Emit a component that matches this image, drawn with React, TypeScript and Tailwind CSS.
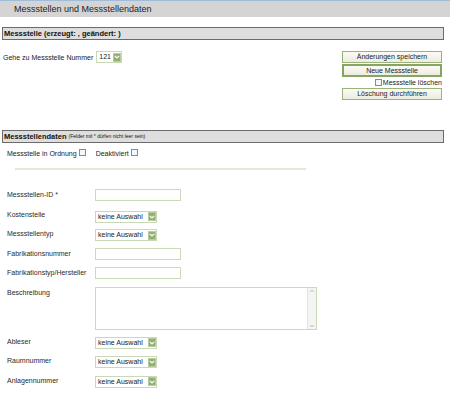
import React from "react";

function Arrow() {
  return (
    <span className="flex h-[9px] w-[8px] items-center justify-center border border-[#b9cca0] bg-[#93ad72]">
      <svg width="6" height="4" viewBox="0 0 6 4">
        <path d="M0.8 0.8 L3 3 L5.2 0.8" fill="none" stroke="#ffffff" strokeWidth="1.1" />
      </svg>
    </span>
  );
}

function Select({ value, w }: { value: string; w: string }) {
  return (
    <div className={`flex h-[12px] items-center justify-between border border-[#c9d8b6] bg-white pl-[2px] pr-[0px] ${w}`}>
      <span className="text-[7px] leading-[10px] text-[#222]">{value}</span>
      <Arrow />
    </div>
  );
}

function Input({ w = "w-[86px]" }: { w?: string }) {
  return <div className={`h-[12px] border border-[#cbdbb7] bg-white ${w}`} />;
}

function Checkbox() {
  return <span className="inline-block h-[7px] w-[7px] border border-[#6f8fb8] bg-[#f3f6fa]" />;
}

function Button({ label, strong }: { label: string; strong?: boolean }) {
  return (
    <div
      className={`flex w-[100px] items-center justify-center bg-gradient-to-b from-[#fbfbf5] to-[#ecece0] text-[7px] leading-[8px] text-[#222] ${
        strong ? "h-[13px] border-2 border-[#87a464]" : "h-[12px] border border-[#99b47a]"
      }`}
    >
      {label}
    </div>
  );
}

function Row({ label, children, h = "h-[19.5px]" }: { label: string; children: React.ReactNode; h?: string }) {
  return (
    <div className={`flex items-start ${h}`}>
      <div className="w-[95px] pl-[7px] pt-[2px] text-[7px] leading-[9px] text-[#2a2a2a]">{label}</div>
      <div className="pt-[1px]">{children}</div>
    </div>
  );
}

export default function App() {
  return (
    <div
      className="relative h-[400px] w-[450px] overflow-hidden bg-white text-[#222]"
      style={{ fontFamily: '"Liberation Sans", Arial, sans-serif' }}
    >
      <div className="h-[17px] border-t border-[#9fbcd9] bg-[#d4d4d4] pl-[14px] text-[9px] leading-[16px] text-[#1e1e1e]">
        Messstellen und Messstellendaten
      </div>

      <div className="ml-[2px] mt-[10px] h-[13px] w-[442px] border border-[#6b6b6b] bg-[#dedede] pl-[1px] text-[7.5px] font-bold leading-[11px] text-[#111]">
        Messstelle (erzeugt: , geändert: )
      </div>

      <div className="mt-[11px] flex justify-between">
        <div className="flex h-[12px] items-center gap-[3px] pl-[3px]">
          <span className="text-[7px] leading-[9px] text-[#222]">Gehe zu Messstelle Nummer</span>
          <Select value="121" w="w-[26px]" />
        </div>
        <div className="mr-[8px] flex w-[100px] flex-col items-end gap-[1px]">
          <Button label="Änderungen speichern" />
          <Button label="Neue Messstelle" strong />
          <div className="flex h-[9px] items-center gap-[1px] text-[7px] leading-[8px]">
            <Checkbox />
            <span>Messstelle löschen</span>
          </div>
          <Button label="Löschung durchführen" />
        </div>
      </div>

      <div className="ml-[2px] mt-[30px] flex h-[13px] w-[442px] items-center border border-[#6b6b6b] bg-[#dedede] pl-[1px] text-[#111]">
        <span className="text-[7.5px] font-bold leading-[11px]">Messstellendaten</span>
        <span className="ml-[2px] text-[5px] leading-[11px]">(Felder mit * dürfen nicht leer sein)</span>
      </div>

      <div className="mt-[5px] flex h-[10px] items-center pl-[7px] text-[7px] leading-[9px]">
        <span>Messstelle in Ordnung</span>
        <span className="ml-[2px]"><Checkbox /></span>
        <span className="ml-[10px]">Deaktiviert</span>
        <span className="ml-[2px]"><Checkbox /></span>
      </div>

      <div className="ml-[15px] mt-[10px] h-[2px] w-[291px] bg-[#e6e6dc]" />

      <div className="mt-[18px] flex flex-col">
        <Row label="Messstellen-ID *"><Input /></Row>
        <Row label="Kostenstelle"><div className="pt-[2px]"><Select value="keine Auswahl" w="w-[62px]" /></div></Row>
        <Row label="Messstellentyp"><div className="pt-[1px]"><Select value="keine Auswahl" w="w-[62px]" /></div></Row>
        <Row label="Fabrikationsnummer"><Input /></Row>
        <Row label="Fabrikationstyp/Hersteller"><Input /></Row>
        <Row label="Beschreibung" h="h-[49px]">
          <div className="flex h-[43px] w-[222px] justify-end border border-[#cbdbb7] bg-white">
            <div className="flex w-[9px] flex-col items-center justify-between border-l border-[#e4e4e4] bg-[#f4f4f4] py-[1px]">
              <svg width="6" height="4" viewBox="0 0 6 4"><path d="M1 3 L3 1 L5 3" fill="none" stroke="#b8b8b8" strokeWidth="0.9" /></svg>
              <svg width="6" height="4" viewBox="0 0 6 4"><path d="M1 1 L3 3 L5 1" fill="none" stroke="#b8b8b8" strokeWidth="0.9" /></svg>
            </div>
          </div>
        </Row>
        <Row label="Ableser"><div className="pt-[1px]"><Select value="keine Auswahl" w="w-[62px]" /></div></Row>
        <Row label="Raumnummer"><div className="pt-[1px]"><Select value="keine Auswahl" w="w-[62px]" /></div></Row>
        <Row label="Anlagennummer"><div className="pt-[1px]"><Select value="keine Auswahl" w="w-[62px]" /></div></Row>
      </div>
    </div>
  );
}
